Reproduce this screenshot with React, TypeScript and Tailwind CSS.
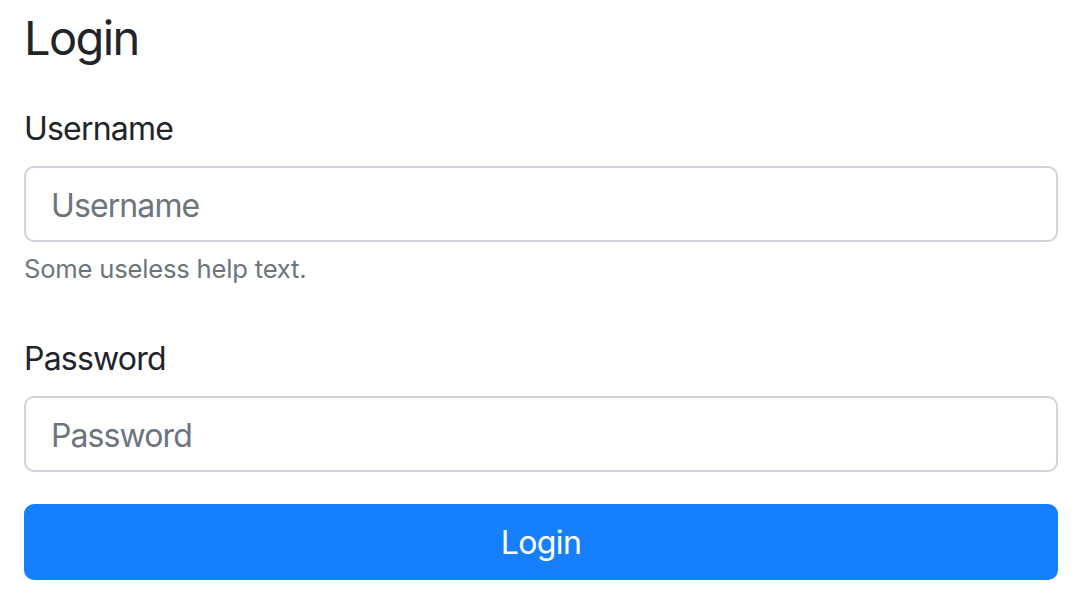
export default function App() {
  return (
    <div className="min-h-screen bg-white pl-[24px] pr-[20px] pt-[10px] font-['Inter','Liberation_Sans',sans-serif] text-[#212529]">
      <h4 className="mb-[39px] text-[47px] font-normal leading-[1.2] tracking-[-1.6px]">Login</h4>
      <form onSubmit={(e) => e.preventDefault()}>
        <div className="mb-[46px]">
          <label htmlFor="username" className="mb-[13px] block text-[32px] leading-[1.5] tracking-[-0.8px]">
            Username
          </label>
          <input
            id="username"
            type="text"
            placeholder="Username"
            className="block h-[76px] w-full rounded-[10px] border-2 border-[#ced4da] px-[25px] pt-[3px] text-[32px] tracking-[-0.9px] text-[#495057] outline-none placeholder:text-[#6c757d]"
          />
          <small className="mt-[8px] block text-[25.6px] leading-[1.5] tracking-[-0.2px] text-[#6c757d]">
            Some useless help text.
          </small>
        </div>
        <div className="mb-[32px]">
          <label htmlFor="password" className="mb-[13px] block text-[32px] leading-[1.5] tracking-[-0.8px]">
            Password
          </label>
          <input
            id="password"
            type="password"
            placeholder="Password"
            className="block h-[76px] w-full rounded-[10px] border-2 border-[#ced4da] px-[25px] pt-[3px] text-[32px] tracking-[-0.9px] text-[#495057] outline-none placeholder:text-[#6c757d]"
          />
        </div>
        <button
          type="submit"
          className="block h-[76px] w-full rounded-[10px] bg-[#167ffc] pt-[3px] text-[32px] tracking-[-0.6px] text-white"
        >
          Login
        </button>
      </form>
    </div>
  );
}
